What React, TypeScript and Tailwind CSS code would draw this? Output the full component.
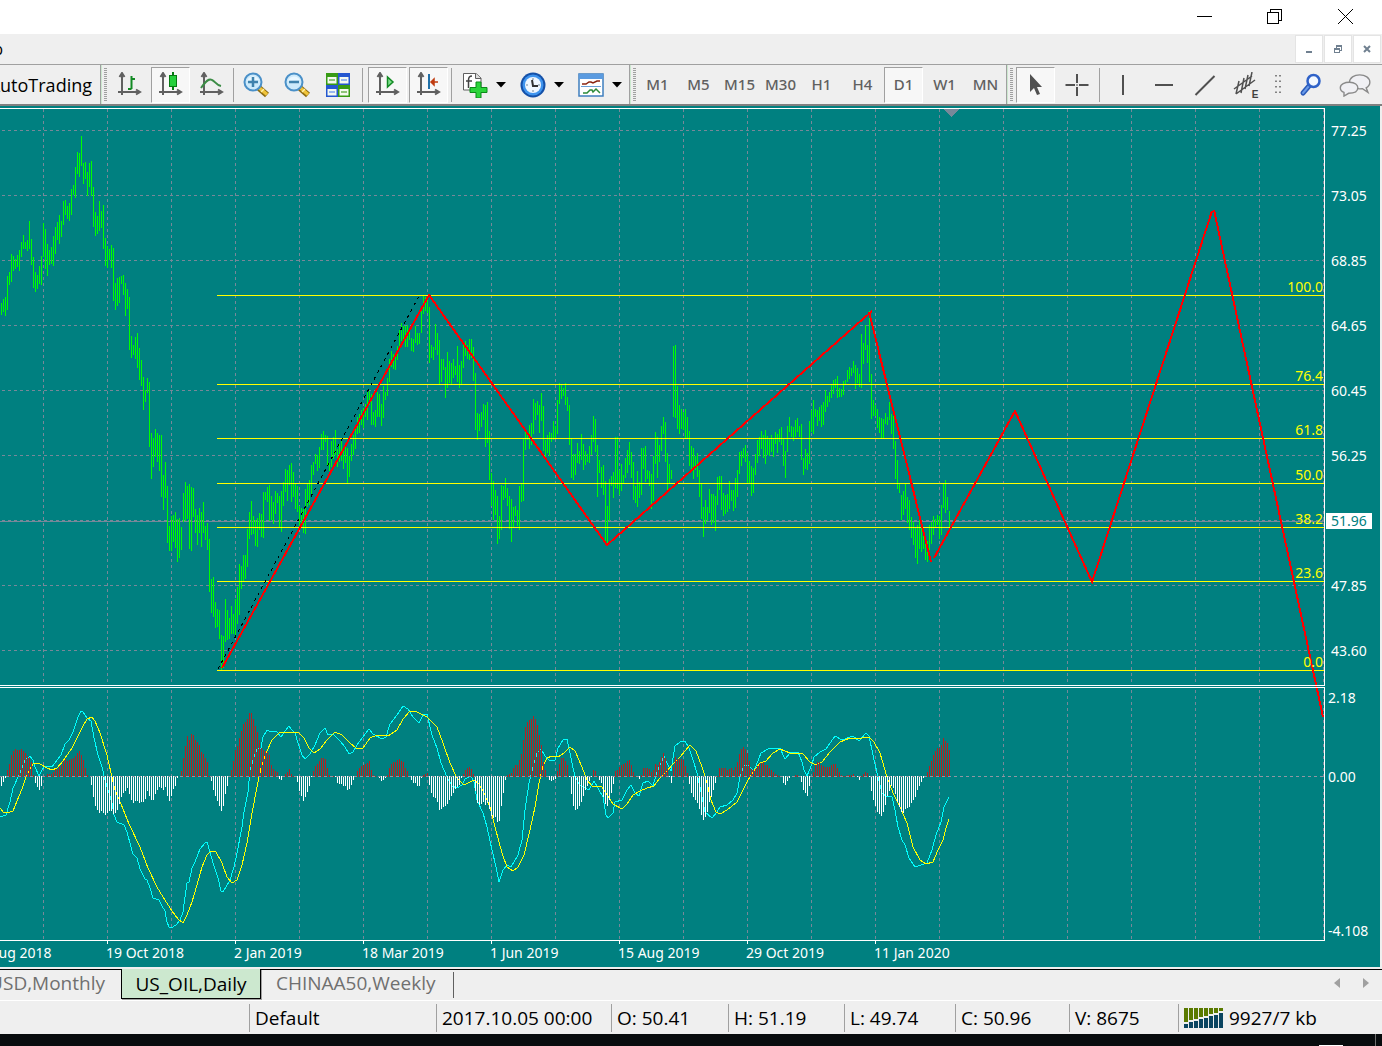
import type { ReactNode } from 'react';

/* High and low of every daily bar, two pixels apart, starting at x = 1. */
const BARS = `303,315 299,312 297,316 276,310 272,285 254,282 256,271 259,269 255,267 250,271 242,257 235,249 242,249 240,251 221,249 239,265 257,288 272,292 275,289 266,284
256,285 223,257 229,269 244,276 250,265 247,264 236,266 227,254 222,240 215,244 221,237 201,225 200,215 206,219 203,221 189,215 185,195 167,198 152,174 153,177
136,166 163,184 162,179 172,196 163,187 161,196 187,227 212,236 216,234 201,231 211,228 205,249 238,266 246,268 249,260 245,268 248,301 283,310 278,306 277,303
276,284 275,295 283,316 289,309 297,350 336,358 345,355 337,359 333,368 348,380 360,386 377,410 390,402 378,393 382,447 433,479 438,467 429,457 433,462 435,471
435,497 475,510 462,498 486,543 526,551 516,551 515,542 512,548 519,562 518,558 527,550 493,522 482,521 486,519 484,549 487,551 488,517 509,533 515,545 508,533
512,547 502,533 526,540 523,550 539,592 579,613 577,617 602,628 609,627 610,639 635,670 636,668 599,642 610,640 618,639 606,634 614,634 599,637 587,624 564,615
566,589 555,581 555,579 529,567 512,539 501,535 516,534 520,546 518,547 513,530 514,537 492,538 492,500 487,502 485,521 496,520 502,524 491,514 493,503 496,527
491,532 482,506 469,492 470,501 465,485 463,502 472,497 484,509 486,512 506,526 508,527 509,533 489,534 483,507 480,505 465,494 462,475 454,464 455,471 447,468
434,450 431,450 435,442 436,465 463,471 441,467 437,459 430,455 449,467 444,462 440,461 451,469 447,463 448,483 456,477 444,461 435,455 429,449 417,434 414,433
410,425 408,428 404,417 392,420 391,405 394,425 412,425 410,427 392,417 394,417 404,426 386,418 392,400 378,396 359,382 351,367 354,369 355,370 346,360 330,349
323,341 326,340 326,347 325,347 329,340 338,351 339,352 326,343 333,345 333,344 310,333 296,314 297,311 297,313 307,363 345,358 347,360 324,350 333,355 340,384
359,382 359,370 367,398 352,388 361,383 363,384 359,378 366,375 346,382 365,388 361,384 344,368 341,356 345,359 339,360 339,358 347,381 373,430 413,440 414,431
412,427 404,420 405,447 402,443 431,480 473,506 481,520 490,515 496,544 516,539 485,530 486,500 478,498 488,506 496,529 499,542 507,527 506,516 510,526 486,530
484,502 438,501 432,450 433,440 425,449 423,445 399,434 403,420 401,415 405,433 393,421 406,451 440,457 435,453 432,456 433,442 421,440 426,439 400,434 383,404
384,399 388,396 383,405 397,411 405,445 439,478 454,480 454,475 443,463 451,464 434,460 444,470 451,465 454,462 446,463 435,455 416,442 419,452 445,497 460,473
467,488 465,495 481,543 506,543 479,521 476,486 472,498 437,488 437,489 470,495 464,491 475,483 458,478 450,473 442,465 452,478 462,500 486,503 471,507 482,498
448,495 448,469 446,482 470,479 471,486 474,509 456,501 432,464 437,478 445,462 426,451 417,434 422,462 453,490 464,483 470,479 346,417 345,418 386,429 405,434
409,429 412,430 409,438 417,438 431,466 446,469 448,479 456,470 453,477 470,497 484,519 507,537 500,524 507,521 489,513 494,525 494,523 496,531 477,505 476,490
476,510 493,516 495,514 494,512 481,509 490,501 490,511 478,508 470,497 452,474 451,466 448,458 445,462 453,483 461,483 466,496 468,493 454,475 440,463 437,456
431,449 435,458 430,464 436,455 438,456 435,452 438,457 432,444 434,453 429,442 427,445 438,466 451,478 426,452 417,432 426,437 427,441 420,437 418,432 426,437
424,460 458,475 449,469 453,470 421,464 410,432 400,434 409,417 410,426 407,421 405,427 402,425 390,412 396,407 392,402 385,398 380,394 379,388 376,398 388,397
389,397 381,395 380,385 370,382 367,379 368,376 361,373 365,389 368,383 374,387 334,388 343,364 325,350 345,363 311,382 374,419 400,416 405,416 409,428 417,433
418,438 419,438 413,424 417,425 402,420 414,434 416,449 441,479 460,489 483,493 495,520 491,515 484,509 497,523 500,530 517,538 522,545 527,558 525,564 518,549
528,552 536,549 544,560 541,562 525,550 522,544 516,535 519,527 515,525 516,539 505,535 484,508 480,513 497,510 511,527`;

/* Height of every histogram bar, above (+) or below (-) the zero line. */
const HISTOGRAM = `-10 -6 -2 7 13 22 26 28 27 27 28 26 24 21 19 15 2 -7 -11 -14 -10 0 1 3 3 3 5 8 8 10 12 16 18 16 17 18 19 21 24 26 22 17 9 2 0
-9 -21 -30 -34 -37 -35 -37 -39 -37 -35 -35 -38 -37 -34 -28 -21 -17 -15 -12 -18 -24 -27 -25 -25 -27 -26 -26 -23 -15 -20 -24 -24 -18 -14 -11 -12 -14 -11 -20 -25 -20 -13 -10 -2 0
6 19 31 41 37 43 42 37 35 32 25 23 19 15 1 -5 -14 -20 -25 -30 -35 -30 -18 -10 -1 7 16 27 31 39 46 53 55 58 64 64 58 51 45 37 29 27 26 25 22 12 8 6 5 -3 -4 1 3 5 8 3 1 -1 -6 -15 -20 -25 -21 -16 -10 -1 6 11 13 16
19 19 18 9 2 1 1 -1 -7 -8 -8 -10 -10 -14 -13 -9 -4 0 6 9 11 12 13 14 16 7 2 1 0 -2 -5 -4 -2 2 9 13 15 15 17 18 16 15 9 6 1 -4 -7 -7 -10 -10 -2 2 3 4 -9 -17 -21 -22 -26 -34 -33 -31 -30 -28 -24 -20 -17 -13 -11 -9 -2 3 7 9 10 8 3
-15 -27 -29 -28 -26 -29 -27 -33 -40 -42 -41 -46 -45 -30 -17 -4 2 3 4 9 12 12 17 23 37 50 55 57 58 61 58 52 42 32 15 7 -1 -4 -5 -4 -3 6 13 19 19 16 12 -1 -18 -30 -34 -33 -30 -26 -20 -14 -10 -5 -1 7 6 1 -4 -7 -21 -28 -30 -24 -17 -8 6 7 10 12 13 14 16 17 12 5 1 -1 -3
2 9 9 9 8 5 7 13 12 15 20 24 19 8 -1 -7 10 20 18 18 18 17 11 4 -8 -17 -21 -24 -27 -33 -39 -44 -41 -36 -26 -21 -14 -7 1 9 9 9 9 7 8 9 7 10 15 23 28 30 28 24 16 8 7 8 11 13 14 15 12 12 9 7 5 3 2 1 1 -7 -9 -5 -2 0 0 2 2 1 -6 -14 -17 -20 -10 0
5 12 15 15 12 11 10 10 10 12 13 13 9 5 2 1 1 2 2 2 3 1 -1 -4 1 3 5 4 -1 -15 -24 -30 -36 -38 -40 -36 -29 -20 -15 -10 -12 -18 -26 -31 -36 -37 -33 -32 -31 -27 -24 -21 -14 -10 -6 -2 1 5 11 16 22 26 29 29 32 39 36 34 27`;

/* Oscillator curves in thirds of a pixel, in three stretches of 960 units. */
const MAIN_CURVE = [
  '0,412 18,404 30,365 40,325 60,280 75,240 90,228 98,240 105,262 118,288 125,270 135,258 155,262 170,240 184,226 195,193 208,180 220,155 235,110 243,94 250,97 262,115 272,122 282,175 293,225 307,260 314,300 325,330 336,370 343,405 352,425 372,435 382,455 392,500 400,522 410,535 420,568 435,598 442,600 450,625 458,655 476,659 485,677 496,693 502,725 508,742 514,745 528,736 540,720 548,695 555,650 562,608 568,605 575,565 585,545 600,508 614,490 622,487 630,515 640,550 655,595 663,632 670,635 690,600 702,560 712,520 725,440 733,395 743,335 750,270 762,232 772,208 782,203 790,170 800,149 808,154 830,155 842,170 855,152 868,138 876,150 886,160 895,190 905,225 915,238 930,222 945,195 960,160',
  '15,143 25,165 40,163 60,183 75,200 87,222 98,216 110,195 130,170 148,146 160,163 185,176 197,170 210,133 230,105 248,79 265,88 280,110 298,130 310,105 322,103 335,165 352,205 362,250 380,292 395,318 412,325 425,315 435,297 452,288 462,305 472,360 490,400 502,440 515,510 528,560 538,605 550,570 562,555 572,562 582,545 595,525 605,480 615,390 628,310 640,260 650,218 662,208 675,228 690,242 706,240 715,205 728,180 742,176 752,235 765,290 780,315 795,325 808,330 822,303 835,325 850,350 858,405 865,414 880,398 885,365 905,360 920,330 932,315 945,338 958,347',
  '10,308 25,303 38,318 48,285 60,255 73,228 82,248 94,272 105,198 120,186 135,184 148,205 158,240 172,280 185,350 195,395 215,414 230,395 240,380 262,375 280,360 290,340 300,290 312,256 325,254 342,272 362,220 385,208 420,204 435,236 450,220 475,217 485,245 493,270 502,288 515,252 522,232 540,215 557,207 585,167 605,180 638,167 658,182 678,160 688,168 698,225 710,280 725,338 738,347 755,350 765,390 775,440 785,480 795,495 808,535 825,562 842,556 862,548 875,510 888,465 902,425 912,380 926,352',
];
const SIGNAL_CURVE = [
  '0,383 10,396 22,400 38,392 50,362 65,328 78,290 92,260 103,250 120,252 140,264 155,269 170,264 190,243 215,205 245,145 262,118 275,112 285,122 300,160 320,225 333,280 345,330 362,372 388,432 420,500 445,565 470,620 490,650 515,693 535,718 550,728 562,705 575,665 590,615 605,560 620,525 632,513 648,515 665,550 682,590 697,608 712,600 726,555 740,490 755,400 770,320 782,265 798,220 815,180 838,158 865,155 895,156 912,175 928,205 943,218',
  '0,208 20,180 45,157 65,165 90,190 108,205 130,203 150,175 170,164 205,167 230,150 250,117 270,94 290,95 320,112 350,140 370,190 390,250 410,293 432,314 462,301 478,312 492,340 510,380 525,440 545,520 562,560 578,572 595,560 612,525 630,450 645,380 658,310 670,258 682,235 695,227 715,230 732,220 750,202 765,212 785,260 800,300 815,319 845,321 862,345 880,372 905,386 920,372 938,345',
  '0,333 20,325 42,318 60,295 80,272 100,252 120,230 150,195 168,212 185,260 200,310 213,360 228,395 240,401 262,390 292,365 320,305 340,275 360,250 378,242 400,218 420,207 450,218 490,222 510,245 528,254 545,247 570,215 600,185 630,174 665,175 688,170 703,187 720,220 740,290 760,340 780,380 800,430 820,500 840,540 858,553 878,546 895,510 908,480 918,445 928,418',
];

function curvePoints(parts: string[]) {
  return parts
    .map((part, i) =>
      part
        .split(' ')
        .map((p) => {
          const [x, y] = p.split(',').map(Number);
          return `${Math.round((x + i * 960) / 3)},${Math.round(680 + y / 3)}`;
        })
        .join(' '),
    )
    .join(' ');
}

const barPath = BARS.split(/\s+/)
  .map((b, i) => {
    const [high, low] = b.split(',');
    return `M${i * 2 + 1.5} ${high}V${low}`;
  })
  .join('');
const histogram = HISTOGRAM.split(/\s+/).map(Number);
const risePath = histogram.map((v, i) => (v > 0 ? `M${i * 2 + 1.5} ${777 - v}V777` : '')).join('');
const fallPath = histogram.map((v, i) => (v < 0 ? `M${i * 2 + 1.5} 776V${776 - v}` : '')).join('');

const gridX = Array.from({ length: 21 }, (_, i) => 43 + i * 64);
const gridY = [130, 195, 260, 325, 390, 455, 520, 585, 650];
const levels = [
  { y: 295, label: '100.0' },
  { y: 384, label: '76.4' },
  { y: 438, label: '61.8' },
  { y: 483, label: '50.0' },
  { y: 527, label: '38.2' },
  { y: 581, label: '23.6' },
  { y: 670, label: '0.0' },
];
const prices = ['77.25', '73.05', '68.85', '64.65', '60.45', '56.25', '51.96', '47.85', '43.60'];
const dates = ['6 Aug 2018', '19 Oct 2018', '2 Jan 2019', '18 Mar 2019', '1 Jun 2019', '15 Aug 2019', '29 Oct 2019', '11 Jan 2020'];

function Plot() {
  return (
    <div className="relative min-w-0 flex-1">
      <svg viewBox="0 106 1325 838" preserveAspectRatio="none" className="absolute inset-0 h-full w-full" fill="none" shapeRendering="crispEdges">
        <g stroke="#778899" strokeDasharray="3 3">
          {gridX.map((x) => (
            <path key={x} d={`M${x + 0.5} 109V685M${x + 0.5} 690V940`} />
          ))}
          {gridY.map((y) => (
            <path key={y} d={`M2 ${y + 0.5}H1324`} />
          ))}
        </g>
        <path d="M0 521.5H1324" stroke="#778899" />
        <path d={barPath} stroke="#00ff00" />
        {levels.map((l) => (
          <path key={l.y} d={`M217 ${l.y + 0.5}H1324`} stroke="#ffff00" />
        ))}
        <path d="M218 669L419 296" stroke="#000" strokeDasharray="3 4" />
        <path d="M222 668L429 295L607 545L872 311M869 312L931 562M934 558L1015 411L1092 582L1212 211M1214 210L1323 717" stroke="#ff0000" strokeWidth="2" />
        <polyline points={curvePoints(MAIN_CURVE)} stroke="#00ffff" />
        <polyline points={curvePoints(SIGNAL_CURVE)} stroke="#ffff00" />
        <path d={risePath} stroke="#b22222" />
        <path d={fallPath} stroke="#ffffff" />
        <path d="M0 776.5H1324" stroke="#8f97a3" strokeDasharray="3 3" />
        <path d="M943 109H959L951 117Z" fill="#778899" />
        <path d="M0 108.5H1325M0 685.5H1325M0 687.5H1325M0 940.5H1325M1324.5 108V685M1324.5 688V941" stroke="#fff" />
        <path d="M107.5 941V944M235.5 941V944M363.5 941V944M491.5 941V944M619.5 941V944M747.5 941V944M875.5 941V944" stroke="#fff" />
      </svg>
      {levels.map((l) => (
        <span key={l.y} className="absolute right-0.5 -translate-y-full text-sm leading-4 text-[#ffff00]" style={{ top: `${((l.y - 106) / 838) * 100}%` }}>
          {l.label}
        </span>
      ))}
    </div>
  );
}

function Chart() {
  return (
    <main className="mr-0.5 flex flex-1 flex-col bg-[#008080] font-['Noto_Sans',sans-serif] text-sm text-white">
      <div className="flex flex-1">
        <Plot />
        <div className="flex w-[55px] flex-col pl-px leading-4">
          <div className="mt-[17px] flex h-[536px] flex-col justify-between">
            {prices.map((p) => (
              <span key={p} className={p === '51.96' ? 'mr-2 bg-white pl-[5px] text-[#008080]' : 'pl-[5px]'}>
                {p}
              </span>
            ))}
          </div>
          <span className="mt-[31px] pl-0.5">2.18</span>
          <span className="mt-[63px] pl-0.5">0.00</span>
          <span className="mt-auto mb-[5px] pl-0.5">-4.108</span>
        </div>
      </div>
      <div className="-ml-[22px] flex h-[23px] overflow-hidden">
        {dates.map((d) => (
          <span key={d} className="w-32 shrink-0 leading-[18px] whitespace-nowrap">
            {d}
          </span>
        ))}
      </div>
    </main>
  );
}

function Axes() {
  return <path d="M5 2V23M1 20H22M2.500 5L5 1L7.500 5M19 17.500L23 20L19 22.500" stroke="#606060" strokeWidth="2" fill="none" />;
}

function Icon({ children, size = 26 }: { children: ReactNode; size?: number }) {
  return (
    <svg width={size} height={size} viewBox="0 0 26 26" fill="none" className="shrink-0">
      {children}
    </svg>
  );
}

function Tool({ label, pressed, children }: { label: string; pressed?: boolean; children: ReactNode }) {
  return (
    <button
      aria-label={label}
      aria-pressed={pressed}
      className={
        pressed
          ? 'mx-px flex h-9 w-[39px] items-center justify-center border border-t-[#a0a0a0] border-r-white border-b-white border-l-[#a0a0a0] bg-[#f7f7f7]'
          : 'flex h-9 w-[41px] items-center justify-center'
      }
    >
      {children}
    </button>
  );
}

function DropTool({ label, children }: { label: string; children: ReactNode }) {
  return (
    <button aria-label={label} className="flex h-9 w-[58px] items-center gap-2 pl-2">
      {children}
      <svg width="10" height="6" viewBox="0 0 10 6">
        <path d="M0 0H10L5 5.500Z" fill="#000" />
      </svg>
    </button>
  );
}

function Divider({ gap = 'mx-0.5' }: { gap?: string }) {
  return <span className={`${gap} h-[34px] w-px bg-[#a0a0a0]`} />;
}

function Grip() {
  return (
    <>
      <span className="h-full w-px bg-[#a0a0a0]" />
      <span className="h-full w-px bg-[#cce8cf]" />
      <span className="mx-0.5 h-[34px] w-[3px] bg-[repeating-linear-gradient(#a0a0a0_0_1px,#efefef_1px_2px)]" />
    </>
  );
}

function Magnifier({ plus }: { plus?: boolean }) {
  return (
    <Icon>
      <path d="M16 16L24 23" stroke="#8a6a10" strokeWidth="6" />
      <path d="M16.500 16L24 22.500" stroke="#f0c43a" strokeWidth="3.500" />
      <path d="M18 20L21 17" stroke="#fff0a8" strokeWidth="1.500" />
      <circle cx="10" cy="10" r="8.500" fill="#cdeafb" stroke="#4a90c8" strokeWidth="2" />
      <path d="M4 9A6.500 6.500 0 0 1 16 8" fill="#e9f7ff" />
      <path d={plus ? 'M5 10H15M10 5V15' : 'M5 10H15'} stroke="#3f82ad" strokeWidth="2.500" />
    </Icon>
  );
}

function Toolbar() {
  const frames = ['M1', 'M5', 'M15', 'M30', 'H1', 'H4', 'D1', 'W1', 'MN'];
  return (
    <div className="flex h-[42px] shrink-0 items-center overflow-hidden border-t border-b-2 border-t-[#a0a0a0] border-b-[#808080] bg-[#efefef]">
      <button className="flex h-9 w-[100px] justify-end overflow-hidden pr-2 text-lg leading-9 text-black">AutoTrading</button>
      <Grip />
      <Tool label="Bar chart">
        <Icon>
          <Axes />
          <path d="M14.500 4V17M11 17H14.500M14.500 7H18" stroke="#138a24" strokeWidth="2" />
        </Icon>
      </Tool>
      <Tool label="Candlesticks" pressed>
        <Icon>
          <Axes />
          <path d="M15 0V18" stroke="#067a12" strokeWidth="2" />
          <rect x="11.500" y="3.500" width="7" height="11" fill="#25d03c" stroke="#067a12" />
        </Icon>
      </Tool>
      <Tool label="Line chart">
        <Icon>
          <Axes />
          <path d="M2 16C7 9 10 6 13 8C16 9 17 13 22 14" stroke="#3c8c46" strokeWidth="2" />
        </Icon>
      </Tool>
      <Divider gap="mx-px" />
      <Tool label="Zoom in">
        <Magnifier plus />
      </Tool>
      <Tool label="Zoom out">
        <Magnifier />
      </Tool>
      <Tool label="Tile windows">
        <Icon>
          <path d="M1 1H13V13H1Z" fill="#379b14" />
          <path d="M13 1H25V13H13Z" fill="#2457d0" />
          <path d="M1 13H13V25H1Z" fill="#2457d0" />
          <path d="M13 13H25V25H13Z" fill="#379b14" />
          <path d="M2.500 5H11.500V11.500H2.500ZM14.500 5H23.500V11.500H14.500ZM2.500 17H11.500V23.500H2.500ZM14.500 17H23.500V23.500H14.500Z" fill="#f4faf0" />
          <path d="M4 8H10M16 20H22" stroke="#8fc47a" strokeWidth="2" />
          <path d="M16 8H22M4 20H10" stroke="#9ab8f0" strokeWidth="2" />
        </Icon>
      </Tool>
      <Divider gap="mx-1" />
      <Tool label="Auto scroll" pressed>
        <Icon>
          <Axes />
          <path d="M12.500 5V15L18 10Z" fill="#7ee08c" stroke="#138a24" strokeWidth="1.500" />
        </Icon>
      </Tool>
      <Tool label="Chart shift" pressed>
        <Icon>
          <Axes />
          <path d="M13 2V17" stroke="#2070a8" strokeWidth="2" />
          <path d="M15 10L18 7V13ZM17 10H22" fill="#c03c10" stroke="#c03c10" strokeWidth="1.500" />
        </Icon>
      </Tool>
      <Divider />
      <DropTool label="Indicators">
        <Icon>
          <path d="M1.500 1.500H14L19 6V18H1.500Z" fill="#fff" stroke="#606060" />
          <path d="M13.500 1.500V6.500H19" fill="#ddd" stroke="#606060" />
          <path d="M10 4C7 4 6.500 6 6.500 8V16M4 9H10" stroke="#444" strokeWidth="1.500" />
          <path d="M14 10H19V15.500H25V20.500H19V26H14V20.500H8V15.500H14Z" fill="#2bd43a" stroke="#0a8a18" />
        </Icon>
      </DropTool>
      <DropTool label="Periods">
        <Icon>
          <circle cx="13" cy="13" r="12.500" fill="#1450a8" />
          <circle cx="13" cy="13" r="10.500" fill="#3f94ee" />
          <circle cx="13" cy="13" r="8" fill="#f0f7ff" />
          <path d="M13 6V8M13 18V20M6 13H8M18 13H20" stroke="#789" />
          <path d="M12 8L13 14H18" stroke="#333" strokeWidth="2" />
        </Icon>
      </DropTool>
      <DropTool label="Templates">
        <Icon>
          <rect x="1" y="2" width="24" height="22" fill="#fff" stroke="#3f7fbf" strokeWidth="1.500" />
          <path d="M1 2H25V7H1Z" fill="#5b9be0" />
          <path d="M3 14.500H23" stroke="#6aa0d8" />
          <path d="M4 12H8L11 10H13L15 11L19 9H22" stroke="#8a2410" strokeWidth="1.500" />
          <path d="M5 21H9L12 18H14L15 20L18 17L22 21" stroke="#2c8a38" strokeWidth="1.500" />
        </Icon>
      </DropTool>
      <span className="w-px" />
      <Grip />
      <div className="-ml-px flex">
        {frames.map((f) => (
          <Tool key={f} label={f} pressed={f === 'D1'}>
            <span className="font-['Noto_Sans',sans-serif] text-[15px] font-medium text-[#606060]">{f}</span>
          </Tool>
        ))}
      </div>
      <Grip />
      <Tool label="Cursor" pressed>
        <Icon>
          <path d="M7 2V20L11 16L14 23L17 22L14 15H19Z" fill="#505050" />
        </Icon>
      </Tool>
      <Tool label="Crosshair">
        <Icon>
          <path d="M1.500 13H11M15 13H24.500M13 2V11M13 15V24M12.500 13H13.500" stroke="#505050" strokeWidth="2" />
        </Icon>
      </Tool>
      <Divider />
      <Tool label="Vertical line">
        <Icon>
          <path d="M13 3V23" stroke="#505050" strokeWidth="2" />
        </Icon>
      </Tool>
      <Tool label="Horizontal line">
        <Icon>
          <path d="M4 13H22" stroke="#505050" strokeWidth="2" />
        </Icon>
      </Tool>
      <Tool label="Trendline">
        <Icon>
          <path d="M3.500 23L22.500 4" stroke="#505050" strokeWidth="2" />
        </Icon>
      </Tool>
      <Tool label="Equidistant channel">
        <span className="relative">
          <Icon>
            <path d="M1 17L19 4M3 22L22 8M6 9L3 22M11 6L8 21M15 3L12 17M19 0L16 14" stroke="#505050" strokeWidth="1.500" />
          </Icon>
          <b className="absolute right-0 -bottom-0.5 font-['Liberation_Sans',sans-serif] text-[10px] leading-[10px] text-[#404040]">E</b>
        </span>
      </Tool>
      <span className="flex w-6 justify-center">
        <svg width="6" height="20" viewBox="0 0 6 20">
          <path d="M1 0V20M5 0V20" stroke="#606060" strokeWidth="1.500" strokeDasharray="1.500 4" />
        </svg>
      </span>
      <Tool label="Search">
        <Icon>
          <path d="M11 14L5 21" stroke="#2a5ab8" strokeWidth="5" strokeLinecap="round" />
          <path d="M11 14L5 21" stroke="#6a9ae8" strokeWidth="2" strokeLinecap="round" />
          <circle cx="15.500" cy="9" r="6" fill="#f2f8ff" stroke="#2f62c8" strokeWidth="2.500" />
        </Icon>
      </Tool>
      <button aria-label="Messages" className="ml-2">
        <svg width="34" height="24" viewBox="0 0 36 26" fill="#f0f0f4" stroke="#8a8a8a" strokeWidth="1.500">
          <path d="M22 2C28 2 33 5 33 10C33 13 31 15 29 16L31 21L25 17C16 18 11 14 11 10C11 5 16 2 22 2Z" />
          <path d="M11 10C17 10 20 13 20 16C20 20 16 22 10 22L5 25V21C2 20 1 18 1 16C1 12 6 10 11 10Z" />
        </svg>
      </button>
    </div>
  );
}

function WindowBar() {
  return (
    <header className="flex h-[34px] shrink-0 items-start justify-end bg-white pr-px">
      <button aria-label="Minimize" className="flex h-8 w-[69px] items-center justify-center">
        <svg width="15" height="15" shapeRendering="crispEdges">
          <path d="M0 7.500H15" stroke="#000" />
        </svg>
      </button>
      <button aria-label="Restore" className="flex h-8 w-[70px] items-center justify-center">
        <svg width="15" height="15" fill="none" stroke="#000" shapeRendering="crispEdges">
          <path d="M0.500 3.500H11.500V14.500H0.500ZM3.500 3V0.500H14.500V11.500H12" />
        </svg>
      </button>
      <button aria-label="Close" className="flex h-8 w-[72px] items-center justify-center">
        <svg width="15" height="15" stroke="#000">
          <path d="M0 0L15 15M15 0L0 15" />
        </svg>
      </button>
    </header>
  );
}

function MenuBar() {
  const button = 'flex h-[28px] w-[28px] items-center justify-center border border-[#e4e4e4] bg-white';
  return (
    <nav className="flex h-[30px] shrink-0 items-center gap-px bg-[#efefef] pr-px">
      <button className="flex w-[3px] justify-end overflow-hidden text-base leading-7">Help</button>
      <span className="flex-1" />
      <button aria-label="Minimize chart" className={button}>
        <svg width="10" height="10">
          <path d="M2 8H8" stroke="#708090" strokeWidth="2" />
        </svg>
      </button>
      <button aria-label="Restore chart" className={button}>
        <svg width="10" height="10" fill="none" stroke="#708090" shapeRendering="crispEdges">
          <path d="M1.500 4.500H6.500V8.500H1.500ZM1 5.500H7M3.500 4V1.500H8.500V6.500H7M3 2.500H9" />
        </svg>
      </button>
      <button aria-label="Close chart" className={button}>
        <svg width="10" height="10">
          <path d="M2 2L8 8M8 2L2 8" stroke="#708090" strokeWidth="2" />
        </svg>
      </button>
    </nav>
  );
}

function ChartTabs() {
  return (
    <div className="flex h-[34px] shrink-0 border-b border-b-white bg-[#efefef] pt-0.5 text-[19px] text-[#707070]">
      <button className="flex w-[121px] justify-end overflow-hidden border-t border-black pr-4 leading-[26px] whitespace-nowrap">GBPUSD,Monthly</button>
      <button className="h-[30px] w-[140px] border border-t-0 border-black bg-[#cce8cf] leading-7 text-black shadow-[1px_1px_0_#a0a0a0]">US_OIL,Daily</button>
      <div className="flex flex-1 items-start border-t border-black">
        <button className="w-[192px] pl-[15px] text-left leading-[26px]">CHINAA50,Weekly</button>
        <span className="mt-0.5 h-[26px] w-px bg-[#606060]" />
        <span className="flex-1" />
        <button aria-label="Previous tabs" className="mt-2 mr-[23px]">
          <svg width="6" height="10">
            <path d="M6 0V10L0 5Z" fill="#a0a0a0" />
          </svg>
        </button>
        <button aria-label="Next tabs" className="mt-2 mr-[13px]">
          <svg width="6" height="10">
            <path d="M0 0V10L6 5Z" fill="#a0a0a0" />
          </svg>
        </button>
      </div>
    </div>
  );
}

function StatusBar() {
  const cell = 'h-7 shrink-0 border-l border-[#a0a0a0] pl-[5px] leading-7 whitespace-nowrap';
  return (
    <footer className="flex h-[33px] shrink-0 items-center bg-[#efefef] pl-[249px] text-[19px] text-black">
      <span className={`${cell} w-[187px]`}>Default</span>
      <span className={`${cell} w-[175px]`}>2017.10.05 00:00</span>
      <span className={`${cell} w-[117px]`}>O: 50.41</span>
      <span className={`${cell} w-[116px]`}>H: 51.19</span>
      <span className={`${cell} w-[111px]`}>L: 49.74</span>
      <span className={`${cell} w-[114px]`}>C: 50.96</span>
      <span className={`${cell} w-[109px]`}>V: 8675</span>
      <span className={`${cell} flex items-center gap-1.5`}>
        <svg width="39" height="20" viewBox="0 0 39 20" shapeRendering="crispEdges">
          {[14, 12, 11, 9, 8, 6, 5, 3].map((h, i) => (
            <g key={h}>
              <rect x={i * 5} y="0" width="4" height={h} fill="#5a7a00" />
              <rect x={i * 5} y={h + 2} width="4" height={18 - h} fill="#0a4460" />
            </g>
          ))}
        </svg>
        9927/7 kb
      </span>
    </footer>
  );
}

export default function App() {
  return (
    <div className="flex min-h-screen flex-col overflow-hidden bg-[#efefef] font-['Open_Sans',sans-serif]">
      <WindowBar />
      <MenuBar />
      <Toolbar />
      <Chart />
      <ChartTabs />
      <StatusBar />
      <div className="flex h-3 shrink-0 justify-end bg-[#080c0e]">
        <span className="mr-8 h-px w-6 self-end bg-white" />
        <span className="mr-1.5 w-px bg-[#707070]" />
      </div>
    </div>
  );
}
